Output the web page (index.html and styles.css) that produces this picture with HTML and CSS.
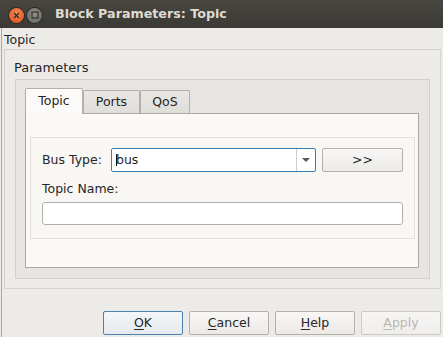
FILE: index.html
```html
<!DOCTYPE html>
<html>
<head>
<meta charset="utf-8">
<link rel="stylesheet" href="styles.css">
</head>
<body>
<div class="titlebar">
  <span class="wbtn close"><svg width="7" height="7" viewBox="0 0 7 7"><path d="M1 1L6 6M6 1L1 6" stroke="#3a2a22" stroke-width="1.3" fill="none"/></svg></span>
  <span class="wbtn max"><svg width="8" height="8" viewBox="0 0 8 8"><rect x="1" y="1" width="6" height="6" stroke="#35342f" stroke-width="1.2" fill="none"/></svg></span>
  <span class="title">Block Parameters: Topic</span>
</div>
<div class="content">
  <div class="top-label">Topic</div>
  <div class="frame">
    <div class="group-title">Parameters</div>
    <div class="group">
      <div class="tabs">
        <div class="tab active t1">Topic</div>
        <div class="tab t2">Ports</div>
        <div class="tab t3">QoS</div>
      </div>
      <div class="pane">
        <div class="inner">
          <div class="row">
            <div class="lbl">Bus Type:</div>
            <div class="combo">
              <div class="val"><span class="caret"></span>bus</div>
              <div class="arrow"><span class="tri"></span></div>
            </div>
            <div class="btn more">&gt;&gt;</div>
          </div>
          <div class="lbl2">Topic Name:</div>
          <div class="input"></div>
        </div>
      </div>
    </div>
  </div>
  <div class="buttons">
    <div class="btn dlg default"><u>O</u>K</div>
    <div class="btn dlg"><u>C</u>ancel</div>
    <div class="btn dlg"><u>H</u>elp</div>
    <div class="btn dlg disabled"><u>A</u>pply</div>
  </div>
</div>
</body>
</html>
```
FILE: styles.css
```css
* { box-sizing: border-box; }
html, body { margin: 0; padding: 0; }
body {
  width: 443px;
  height: 337px;
  overflow: hidden;
  background: #edebe8;
  font-family: "DejaVu Sans", sans-serif;
  font-size: 12.5px;
  line-height: 14px;
  color: #262626;
}
.titlebar {
  height: 28px;
  background: linear-gradient(#47463f, #3a3935);
  display: flex;
  align-items: center;
  padding-left: 9px;
}
.wbtn {
  width: 15px;
  height: 15px;
  border-radius: 50%;
  display: flex;
  align-items: center;
  justify-content: center;
  margin-top: 2px;
}
.close {
  background: radial-gradient(circle at 50% 35%, #f58752, #de4c19);
  box-shadow: 0 0 0 1px #2a2926;
}
.max {
  margin-left: 3px;
  background: radial-gradient(circle at 50% 35%, #8f8d87, #66645f);
  box-shadow: 0 0 0 1px #2a2926;
}
.title {
  margin-left: 13px;
  font-weight: bold;
  font-size: 12.7px;
  color: #dfdbd2;
}
.content {
  height: 309px;
  display: flex;
  flex-direction: column;
  box-shadow: inset 1px 0 0 #eeece9, inset 2px 0 0 #a9a7a3;
}
.top-label {
  margin: 4px 0 0 4px;
  height: 14px;
  line-height: 15px;
}
.frame {
  margin: 3px 0 0 4px;
  width: 437px;
  height: 240px;
  border: 1px solid #d6d3cf;
  padding: 11px 10px 0 10px;
}
.group-title {
  height: 14px;
  margin-left: -1px;
  font-size: 13px;
  line-height: 14px;
}
.group {
  margin-top: 4px;
  height: 200px;
  border: 1px solid #d3d0cc;
  background: #e7e5e1;
  padding: 8px 10px 0 9px;
}
.tabs {
  display: flex;
  align-items: flex-end;
  height: 25px;
}
.tab {
  height: 23px;
  border: 1px solid #b3b0ac;
  border-bottom: none;
  border-radius: 2px 2px 0 0;
  background: linear-gradient(#e9e7e4, #e0ded9);
  text-align: center;
  padding-top: 4px;
}
.tab.active {
  height: 26px;
  margin-bottom: -1px;
  position: relative;
  z-index: 1;
  background: #fcfaf8;
  padding-top: 5px;
}
.t1 { width: 58px; }
.t2 { width: 57px; }
.t3 { width: 50px; }
.pane {
  height: 155px;
  border: 1px solid #aca9a5;
  background: #fbf9f7;
  padding: 23px 3px 0 4px;
}
.inner {
  height: 102px;
  border: 1px solid #e3e0dc;
  background: #f9f7f4;
  padding: 10px 11px 0 11px;
}
.row {
  display: flex;
  align-items: center;
  height: 24px;
}
.lbl {
  width: 69px;
}
.combo {
  width: 205px;
  height: 24px;
  border: 1px solid #3d7fb5;
  border-radius: 2px;
  background: #ffffff;
  display: flex;
}
.val {
  flex: 1;
  display: flex;
  align-items: center;
  padding-left: 4px;
  color: #1e1e1e;
}
.caret {
  width: 1px;
  height: 12px;
  background: #111;
  margin-right: -1px;
  margin-top: -1px;
}
.arrow {
  width: 19px;
  border-left: 1px solid #cfccc8;
  display: flex;
  align-items: center;
  justify-content: center;
}
.tri {
  width: 0;
  height: 0;
  border-left: 4px solid transparent;
  border-right: 4px solid transparent;
  border-top: 4px solid #5a5855;
}
.btn {
  height: 24px;
  border: 1px solid #b4b1ad;
  border-radius: 2px;
  background: linear-gradient(#f8f7f6, #eceae7);
  display: flex;
  align-items: center;
  justify-content: center;
}
.more {
  width: 81px;
  margin-left: 6px;
}
.lbl2 {
  margin-top: 10px;
  height: 14px;
}
.input {
  margin-top: 6px;
  width: 361px;
  height: 23px;
  border: 1px solid #b2afab;
  border-radius: 3px;
  background: #ffffff;
}
.buttons {
  display: flex;
  justify-content: flex-end;
  gap: 6px;
  margin-top: 22px;
  padding-right: 2px;
}
.dlg {
  width: 80px;
}
.dlg u { text-decoration: underline; text-underline-offset: 2px; }
.default {
  border-color: #4a81b0;
  background: linear-gradient(#f4f6f8, #e6eaee);
}
.disabled {
  color: #b9b6b2;
  border-color: #cdcac6;
  background: linear-gradient(#f6f5f4, #efeeec);
}
```
